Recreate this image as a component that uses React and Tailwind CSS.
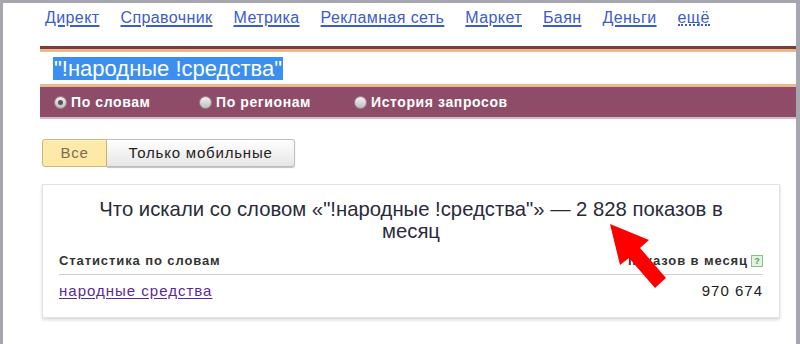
import React from 'react'

const links = ['Директ', 'Справочник', 'Метрика', 'Рекламная сеть', 'Маркет', 'Баян', 'Деньги']

function Radio({ checked, label }) {
  return (
    <label className="flex items-center gap-[5px] text-white font-bold text-[14px] tracking-[0.6px]">
      <span className="w-[11px] h-[11px] rounded-full bg-gradient-to-b from-[#f4f4f4] to-[#bdbdbd] flex items-center justify-center shadow-[0_0_0_1px_#a08090]">
        {checked && <span className="w-[5px] h-[5px] rounded-full bg-[#555]" />}
      </span>
      {label}
    </label>
  )
}

export default function App() {
  return (
    <div className="relative w-[800px] h-[344px] overflow-hidden bg-white border-t-[3px] border-l-[3px] border-r-[4px] border-[#a6a6ae] font-['Liberation_Sans',Arial,sans-serif]">
      {/* top links */}
      <div className="flex gap-[21px] pl-[42px] pt-[3px] h-[43px] text-[16px] tracking-[0.4px]">
        {links.map(l => (
          <a key={l} className="text-[#3c5bd0] underline decoration-[#3c5bd0] decoration-[1.5px] underline-offset-2 h-[20px]">{l}</a>
        ))}
        <a className="text-[#3c5bd0] border-b-2 border-dotted border-[#3c5bd0] h-[20px]">ещё</a>
      </div>

      {/* search block */}
      <div className="ml-[37px] bg-[#8f4c68] border-t-[3px] border-[#7d3b40]">
        <div className="border-y-[3px] border-[#e8b98a] bg-white h-[38px] flex items-center pl-[13px]">
          <span className="bg-[#3a8ff0] text-white text-[22px] leading-[23px] px-[1px]">"!народные !средства"</span>
        </div>
        <div className="flex items-center h-[30px] pl-[15px]">
          <div className="w-[145px]"><Radio checked label="По словам" /></div>
          <div className="w-[155px]"><Radio label="По регионам" /></div>
          <Radio label="История запросов" />
        </div>
      </div>
      <div className="ml-[37px] h-[2px] bg-[#d8b8c8]" />

      {/* tabs */}
      <div className="flex ml-[39px] mt-[20px] h-[28px] text-[15px] tracking-[0.8px]">
        <div className="w-[65px] flex items-center justify-center bg-[#fde9a8] border border-[#cbb77a] rounded-l-[3px] text-[#7a6e55] shadow-[inset_0_1px_0_#fff6d0]">Все</div>
        <div className="w-[188px] flex items-center justify-center bg-gradient-to-b from-white to-[#e6e6e6] border border-l-0 border-[#bfbfbf] rounded-r-[3px] text-[#222] shadow-[0_1px_1px_rgba(0,0,0,0.25)]">Только мобильные</div>
      </div>

      {/* result card */}
      <div className="ml-[39px] mt-[17px] w-[738px] h-[134px] border border-[#e2e2e2] shadow-[0_2px_3px_rgba(0,0,0,0.15)] bg-white px-[16px]">
        <div className="text-center text-[20.3px] leading-[22px] text-[#2a2a3a] pt-[13px] px-[38px]">
          Что искали со словом «"!народные !средства"» — 2 828 показов в месяц
        </div>
        <div className="flex justify-between items-end mt-[9px] pb-[3px] border-b border-[#cfcfcf] text-[13px] tracking-[0.9px] font-bold text-[#333]">
          <span>Статистика по словам</span>
          <span className="flex items-center gap-[3px]">
            показов в месяц
            <span className="w-[12px] h-[12px] border border-[#8cbf8c] bg-[#e4f2df] text-[#5a9a5a] text-[9px] tracking-normal leading-[10px] flex items-center justify-center">?</span>
          </span>
        </div>
        <div className="flex justify-between items-center pt-[5px] text-[15px] tracking-[1px]">
          <a className="text-[#5a2a9a] underline underline-offset-2">народные средства</a>
          <span className="text-[#222]">970 674</span>
        </div>
      </div>

      {/* red arrow */}
      <svg className="absolute left-0 top-0" width="800" height="344" viewBox="0 0 800 344">
        <polygon points="607,221 646,237 637,245 663,275 652,285 626,255 617,262" fill="#f00" />
      </svg>
    </div>
  )
}
